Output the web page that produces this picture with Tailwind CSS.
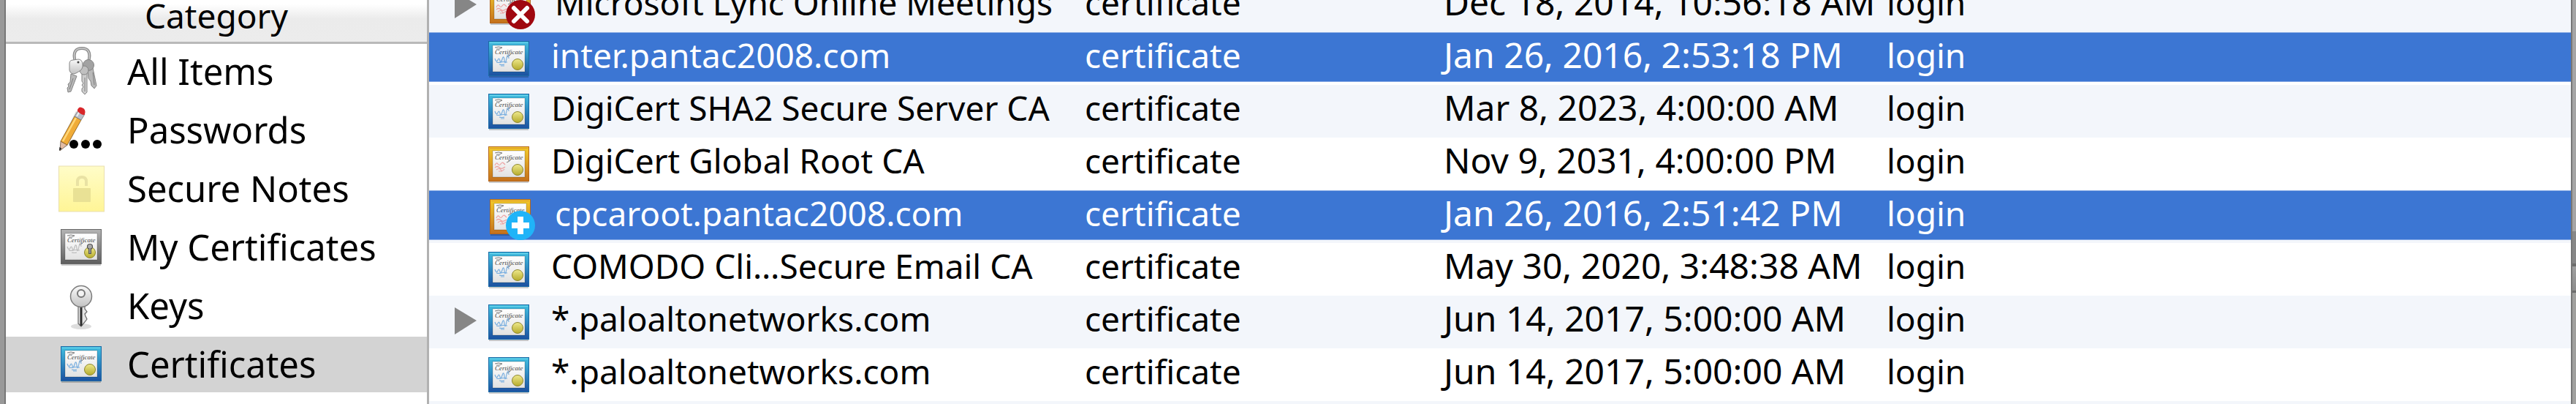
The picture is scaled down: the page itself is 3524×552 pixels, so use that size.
<!DOCTYPE html>
<html lang="en">

<head>
    <meta charset="UTF-8">
    <meta name="viewport" content="width=device-width, initial-scale=1.0">
    <title>Keychain Access</title>
    <script src="https://cdn.jsdelivr.net/npm/@tailwindcss/browser@4"></script>
</head>

<body class="flex h-screen overflow-hidden bg-white text-black font-['Noto_Sans','Open_Sans',sans-serif]">
    <!-- shared icon shapes -->
    <svg class="absolute w-0 h-0" aria-hidden="true">
        <defs>
            <linearGradient id="frame-blue" x1="0" y1="0" x2="0" y2="1">
                <stop offset="0" stop-color="#42bfe0" />
                <stop offset="1" stop-color="#1c51a0" />
            </linearGradient>
            <linearGradient id="frame-gold" x1="0" y1="0" x2="0" y2="1">
                <stop offset="0" stop-color="#f2ca2c" />
                <stop offset="1" stop-color="#c4701c" />
            </linearGradient>
            <linearGradient id="frame-gray" x1="0" y1="0" x2="0" y2="1">
                <stop offset="0" stop-color="#b4b4b4" />
                <stop offset="1" stop-color="#5e5e5e" />
            </linearGradient>
            <linearGradient id="paper" x1="0" y1="0" x2="0" y2="1">
                <stop offset="0" stop-color="#ffffff" />
                <stop offset="1" stop-color="#e2e2e2" />
            </linearGradient>
            <linearGradient id="seal" x1="0" y1="0" x2="0" y2="1">
                <stop offset="0" stop-color="#efe98c" />
                <stop offset="1" stop-color="#b5ab2c" />
            </linearGradient>
            <linearGradient id="note" x1="0" y1="0" x2="0" y2="1">
                <stop offset="0" stop-color="#fffcc8" />
                <stop offset="1" stop-color="#fff596" />
            </linearGradient>
            <linearGradient id="metal" x1="0" y1="0" x2="0" y2="1">
                <stop offset="0" stop-color="#fafafa" />
                <stop offset="1" stop-color="#c2c2c2" />
            </linearGradient>
            <g id="cert-page">
                <rect x="6" y="6" width="44" height="36" fill="url(#paper)" stroke="#000000" stroke-opacity=".2" />
                <path d="M9 9q5-2 10 0q-4 3-8 2" fill="none" stroke="#777777" stroke-width="1" />
                <text x="9" y="18" font-size="9" font-style="italic" font-family="Liberation Serif, serif" fill="#444444">Certificate</text>
                <path d="M25 22q4-1 7-5" fill="none" stroke="#777777" stroke-width="1" />
            </g>
            <g id="cert-seal">
                <circle cx="40" cy="32" r="7.5" fill="url(#seal)" stroke="#8f8830" stroke-width="1" />
            </g>
            <symbol id="cert-blue" viewBox="0 0 56 50">
                <rect x="1" y="3" width="54" height="47" fill="#000000" fill-opacity=".2" />
                <rect x=".5" y=".5" width="55" height="47" fill="url(#frame-blue)" stroke="#1b6ba6" />
                <path d="M2 2.500h52" stroke="#6fd6ec" />
                <use href="#cert-page" />
                <path d="M9 24q2 6 4 2t3 1t3-2t3 1t3-2t3 0M11 29q4 1 6 0t9 0M15 32q4 1 7 0M17 34h5" fill="none" stroke="#78aee0" stroke-width="1.200" />
                <use href="#cert-seal" />
            </symbol>
            <symbol id="cert-gold" viewBox="0 0 56 50">
                <rect x="1" y="3" width="54" height="47" fill="#000000" fill-opacity=".2" />
                <rect x=".5" y=".5" width="55" height="47" fill="url(#frame-gold)" stroke="#b5661a" />
                <path d="M2 2.500h52" stroke="#e09a2a" />
                <use href="#cert-page" />
                <path d="M9 26q2-5 4-2t4 0t4-1t2 2M9 29q3-3 6 0t8-1M11 32q4-3 6 0t5-1M14 34h5" fill="none" stroke="#eda0a0" stroke-width="1.200" />
                <use href="#cert-seal" />
            </symbol>
            <symbol id="cert-gray" viewBox="0 0 56 50">
                <rect x="1" y="3" width="54" height="47" fill="#000000" fill-opacity=".2" />
                <rect x=".5" y=".5" width="55" height="47" fill="url(#frame-gray)" stroke="#666666" />
                <use href="#cert-page" />
                <path d="M9 24q2 6 4 2t3 1t3-2t3 1t3-2t3 0M11 29q4 1 6 0t9 0M15 32q4 1 7 0" fill="none" stroke="#bbbbbb" stroke-width="1.200" />
                <use href="#cert-seal" />
                <circle cx="40" cy="24" r="3.500" fill="#aaaaaa" stroke="#555555" stroke-width="1.200" />
                <path d="M40 26v8" stroke="#555555" stroke-width="4" />
                <path d="M40 25v8" stroke="#aaaaaa" stroke-width="1.500" />
            </symbol>
            <symbol id="key-ring" viewBox="0 0 64 72">
                <path d="M23 22C19 9 24 4 32 4s13 5 9 18" fill="none" stroke="#8a8a8a" stroke-width="4" />
                <path d="M23 22C19 9 24 4 32 4s13 5 9 18" fill="none" stroke="#cccccc" stroke-width="1.500" />
                <g stroke="#858585" stroke-width="1" fill="#b8b8b8">
                    <path d="M40 32l7-1 5 24-3 4-4-4-1-6-3-4z" />
                    <circle cx="41" cy="27" r="7.500" fill="#a2a2a2" />
                    <path d="M32 38h7v26l-3 3-4-4v-4l2-2-2-3 2-2-2-3z" fill="#cdcdcd" />
                    <circle cx="35" cy="34" r="6" fill="#c0c0c0" />
                    <path d="M17 39l8 3-8 21-4 1-1-6 2-2-1-3 3-3z" />
                    <path d="M15 25q0-5 5-5l7-1q5 0 6 6q1 7-4 10l-5 3q-7 3-9-4z" fill="url(#metal)" />
                </g>
                <circle cx="27" cy="23" r="1.500" fill="#444444" />
                <path d="M36 44v19M47 37l2 17M20 45l-5 15" stroke="#808080" stroke-width="1" />
            </symbol>
            <symbol id="pencil" viewBox="0 0 64 72">
                <path d="M1 63L3 51 24 10 34 15 13 57z" fill="#000000" fill-opacity=".15" />
                <path d="M3 51l9 5L2 64z" fill="#e2bca4" stroke="#6e5a4c" stroke-width=".8" />
                <path d="M1.500 59l3 2L1 64z" fill="#222222" />
                <path d="M3 51L22 17l9 5L12 56z" fill="#f0ac38" stroke="#8a5c18" stroke-width=".8" />
                <path d="M6 51L24 19" stroke="#ffd778" stroke-width="2.500" />
                <path d="M22 17l5-8 9 5-5 8z" fill="#b8bcc8" stroke="#777777" stroke-width=".8" />
                <path d="M25 17l4-7" stroke="#eeeeee" stroke-width="2" />
                <path d="M26 8q2-5 6-3q6 2 4 9l-1 1q-4 0-9-5z" fill="#d8262a" />
                <circle cx="21" cy="55" r="6" />
                <circle cx="37" cy="55" r="6" />
                <circle cx="53" cy="55" r="6" />
            </symbol>
            <symbol id="secure-note" viewBox="0 0 64 72">
                <rect x=".5" y="5" width="62" height="62" fill="url(#note)" stroke="#e9dfae" />
                <rect x="20" y="35" width="24" height="19" rx="1" fill="#e9e195" />
                <path d="M26 32v-6q0-6 6-6t6 6v6" fill="none" stroke="#e9e2a4" stroke-width="4" />
            </symbol>
            <symbol id="key" viewBox="0 0 64 72">
                <ellipse cx="31" cy="64" rx="14" ry="4" fill="#dddddd" />
                <path d="M27 36h9v4l3 4-3 3 1 3 2 4-3 4-5 6-4-4z" fill="#e4e4e4" stroke="#666666" stroke-width="1.200" />
                <path d="M31 37v26" stroke="#2c2c2c" stroke-width="3" />
                <circle cx="31" cy="23" r="14.500" fill="url(#metal)" stroke="#7c7c7c" stroke-width="1.500" />
                <circle cx="31" cy="19" r="5" fill="#f4f4f4" stroke="#777777" stroke-width="2" />
            </symbol>
        </defs>
    </svg>

    <div class="w-2 shrink-0 bg-[#999999] border-r-2 border-[#777777]"></div>

    <aside class="w-[579px] shrink-0 border-r-3 border-[#b1b1b1]">
        <h2 class="h-[60px] border-b-3 border-[#b9b9b9] bg-linear-to-b from-white from-10% via-[#ebebeb] via-45% to-[#ececec] text-center text-[46px] leading-[42px]">Category</h2>
        <nav id="categories" class="flex flex-col gap-1"></nav>
    </aside>

    <main class="flex-1 min-w-0 overflow-hidden">
        <!-- list is scrolled part way into its first row -->
        <table class="w-full -mt-7 table-fixed border-separate border-spacing-0 text-[46px] leading-[62px]">
            <colgroup>
                <col class="w-[897px]">
                <col class="w-[491px]">
                <col class="w-[606px]">
                <col>
            </colgroup>
            <tbody id="certificates"></tbody>
        </table>
    </main>

    <!-- sliver of the window behind -->
    <div class="flex flex-col w-[7px] shrink-0 border-l-2 border-[#777777] bg-[#a0a09e]">
        <div class="h-[316px] bg-[#a5a5a5]"></div>
        <div class="h-12 bg-[#878787] border-b-4 border-[#6c6c6c]"></div>
        <div class="h-9 bg-linear-to-b from-[#a0a0a0] to-[#8c8c8c] border-b-3 border-[#6c6c6c]"></div>
    </div>

    <script>
        const categories = [
            { name: 'All Items', icon: 'key-ring' },
            { name: 'Passwords', icon: 'pencil' },
            { name: 'Secure Notes', icon: 'secure-note' },
            { name: 'My Certificates', icon: 'cert-gray', framed: true },
            { name: 'Keys', icon: 'key' },
            { name: 'Certificates', icon: 'cert-blue', framed: true, active: true },
        ];
        const certificates = [
            { name: 'Microsoft Lync Online Meetings', expires: 'Dec 18, 2014, 10:56:18 AM', icon: 'cert-gold', badge: 'invalid', children: true },
            { name: 'inter.pantac2008.com', expires: 'Jan 26, 2016, 2:53:18 PM', icon: 'cert-blue', selected: true },
            { name: 'DigiCert SHA2 Secure Server CA', expires: 'Mar 8, 2023, 4:00:00 AM', icon: 'cert-blue' },
            { name: 'DigiCert Global Root CA', expires: 'Nov 9, 2031, 4:00:00 PM', icon: 'cert-gold' },
            { name: 'cpcaroot.pantac2008.com', expires: 'Jan 26, 2016, 2:51:42 PM', icon: 'cert-gold', badge: 'trusted', selected: true },
            { name: 'COMODO Cli…Secure Email CA', expires: 'May 30, 2020, 3:48:38 AM', icon: 'cert-blue' },
            { name: '*.paloaltonetworks.com', expires: 'Jun 14, 2017, 5:00:00 AM', icon: 'cert-blue', children: true },
            { name: '*.paloaltonetworks.com', expires: 'Jun 14, 2017, 5:00:00 AM', icon: 'cert-blue' },
        ];
        const badges = {
            invalid: '<circle cx="44" cy="36" r="20" fill="#a00810" /><path d="M35 27l18 18M53 27L35 45" stroke="#ffffff" stroke-width="6" stroke-linecap="round" />',
            trusted: '<circle cx="44" cy="36" r="20" fill="#20b4f8" /><path d="M44 24v24M32 36h24" stroke="#ffffff" stroke-width="8" />',
        };

        function makeCategory(category) {
            let background = category.active ? 'bg-[#d3d3d3]' : 'bg-white';
            let icon = category.framed
                ? `<svg class="w-14 h-[50px] ml-[3px]"><use href="#${category.icon}" /></svg>`
                : `<svg class="w-16 h-[72px]"><use href="#${category.icon}" /></svg>`;
            return `
            <button class="${background} flex items-center w-full h-[76px] pl-18 text-left text-[49px] leading-[74px] cursor-pointer">
                <span class="w-[94px] shrink-0">${icon}</span>
                <span class="pb-[2px]">${category.name}</span>
            </button>
            `;
        }

        function makeRow(cert, index) {
            let stripe = index % 2 == 0 ? 'bg-[#f3f6fb]' : 'bg-white';
            let cell = cert.selected
                ? 'bg-[#3c76d3] bg-clip-padding text-white border-b-4 border-transparent shadow-[inset_0_1px_0_#86a9e4,inset_0_-1px_0_#86a9e4]'
                : '';
            let arrow = cert.children
                ? '<button class="block mt-[15px] cursor-pointer" aria-label="Show details"><svg class="w-8 h-[38px]" viewBox="0 0 32 38"><path d="M1 1v37L31 19z" fill="#868686" /></svg></button>'
                : '';
            let icon = cert.badge
                ? `<svg class="w-[61px] h-[56px] mt-3 shrink-0 overflow-visible" viewBox="0 0 61 56"><use href="#${cert.icon}" x="2" width="56" height="50" />${badges[cert.badge]}</svg>`
                : `<svg class="w-14 h-[50px] mt-3 shrink-0"><use href="#${cert.icon}" /></svg>`;
            return `
            <tr class="${stripe} h-[72px]">
                <td class="${cell} p-0 align-top">
                    <div class="flex items-start pl-[34px]">
                        <span class="w-[47px] shrink-0">${arrow}</span>
                        ${icon}
                        <span class="ml-[30px] whitespace-nowrap">${cert.name}</span>
                    </div>
                </td>
                <td class="${cell} p-0 align-top">certificate</td>
                <td class="${cell} p-0 align-top text-[48px] whitespace-nowrap">${cert.expires}</td>
                <td class="${cell} p-0 align-top">login</td>
            </tr>
            `;
        }

        document.getElementById('categories').innerHTML = categories.map(makeCategory).join('');
        document.getElementById('certificates').innerHTML = certificates.map(makeRow).join('') + '<tr class="h-[72px] bg-[#f3f6fb]"><td colspan="4"></td></tr>';
    </script>
</body>

</html>
